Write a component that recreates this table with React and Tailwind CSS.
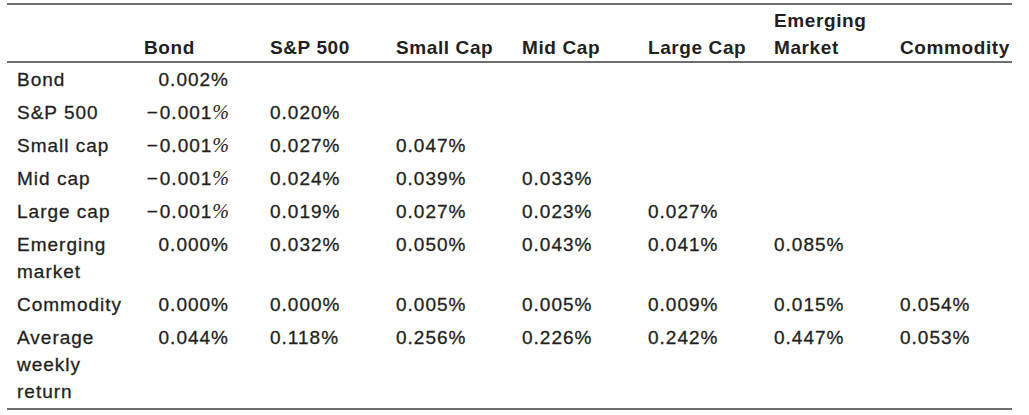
export default function App() {
  const cols = ["Bond", "S&P 500", "Small Cap", "Mid Cap", "Large Cap", ["Emerging", "Market"], "Commodity"]

  const rows = [
    { label: ["Bond"], vals: ["0.002%"] },
    { label: ["S&P 500"], vals: ["-0.001", "0.020%"] },
    { label: ["Small cap"], vals: ["-0.001", "0.027%", "0.047%"] },
    { label: ["Mid cap"], vals: ["-0.001", "0.024%", "0.039%", "0.033%"] },
    { label: ["Large cap"], vals: ["-0.001", "0.019%", "0.027%", "0.023%", "0.027%"] },
    { label: ["Emerging", "market"], vals: ["0.000%", "0.032%", "0.050%", "0.043%", "0.041%", "0.085%"] },
    { label: ["Commodity"], vals: ["0.000%", "0.000%", "0.005%", "0.005%", "0.009%", "0.015%", "0.054%"] },
    { label: ["Average", "weekly", "return"], vals: ["0.044%", "0.118%", "0.256%", "0.226%", "0.242%", "0.447%", "0.053%"] },
  ]

  // negatives use a thin serif percent, like the source typesetting
  const renderVal = (v) => {
    if (v.startsWith("-")) {
      return (
        <>
          <span className="tracking-[2px]">{"\u2212"}</span>
          <span>{v.slice(1)}</span>
          <span className="font-['Liberation_Serif',serif] tracking-normal text-[20px] italic [-webkit-text-stroke:0px]">%</span>
        </>
      )
    }
    return v
  }

  return (
    <div className="w-[1029px] h-[415px] bg-white pt-[3px] pl-[7px] font-['Liberation_Sans',Arial,sans-serif] text-[#231f20] text-[19px] tracking-[1px]">
      <table className="table-fixed border-collapse w-[1005px]">
        <colgroup>
          <col className="w-[127px]" />
          <col className="w-[126px]" />
          <col className="w-[126px]" />
          <col className="w-[126px]" />
          <col className="w-[126px]" />
          <col className="w-[126px]" />
          <col className="w-[126px]" />
          <col className="w-[122px]" />
        </colgroup>
        <thead>
          <tr className="border-t-2 border-b-2 border-[#6d6e71]">
            <th className="pt-[2px]"></th>
            {cols.map((c, i) => (
              <th key={i} className="text-left align-bottom pl-[10px] pt-[2px] font-bold leading-[27px] tracking-[0.6px] whitespace-nowrap">
                {Array.isArray(c) ? (
                  <>
                    {c[0]}
                    <br />
                    {c[1]}
                  </>
                ) : (
                  c
                )}
              </th>
            ))}
          </tr>
        </thead>
        <tbody className="[-webkit-text-stroke:0.3px_#231f20]">
          {rows.map((r, ri) => (
            <tr key={ri} className={ri === rows.length - 1 ? "border-b-2 border-[#6d6e71]" : ""}>
              <td className="align-top pl-[10px] py-[3px] leading-[27px] whitespace-nowrap">
                {r.label.map((l, li) => (
                  <div key={li}>{l}</div>
                ))}
              </td>
              {Array.from({ length: 7 }).map((_, ci) => {
                const v = r.vals[ci]
                return (
                  <td
                    key={ci}
                    className={
                      ci === 0
                        ? "align-top text-right pr-[31px] py-[3px] leading-[27px] whitespace-nowrap"
                        : "align-top text-left pl-[10px] py-[3px] leading-[27px] whitespace-nowrap"
                    }
                  >
                    {v ? renderVal(v) : null}
                  </td>
                )
              })}
            </tr>
          ))}
        </tbody>
      </table>
    </div>
  )
}
